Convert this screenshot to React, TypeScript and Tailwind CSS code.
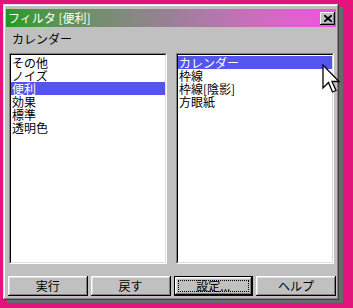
import React from 'react';

// --- Win9x style filter dialog ---

const effects = ['その他', 'ノイズ', '便利', '効果', '標準', '透明色'];
const tools = ['カレンダー', '枠線', '枠線[陰影]', '方眼紙'];

const ListBox: React.FC<{ items: string[]; selected: number }> = ({ items, selected }) => (
    <div className="w-[158px] h-[211px] border border-t-[#808080] border-l-[#808080] border-r-white border-b-white">
        <div className="w-full h-full bg-white border border-t-black border-l-black border-r-[#dfdfdf] border-b-[#dfdfdf] pt-[1px]">
            {items.map((item, i) => (
                <div
                    key={item}
                    className={`h-[13px] leading-[13px] pl-[1px] whitespace-nowrap ${i === selected ? 'bg-[#5454ee] text-white' : 'text-black'}`}
                >
                    {item}
                </div>
            ))}
        </div>
    </div>
);

const DlgButton: React.FC<{ label: string; isDefault?: boolean }> = ({ label, isDefault }) => (
    <div className={`h-[20px] ${isDefault ? 'border border-black' : ''}`}>
        <div className="h-full bg-[#c0c0c0] shadow-[inset_-1px_-1px_#000,inset_1px_1px_#fff,inset_-2px_-2px_#808080,inset_2px_2px_#dfdfdf] flex items-center justify-center p-[3px]">
            {isDefault ? (
                <div className="w-full h-full border border-dotted border-black flex items-center justify-center leading-none">{label}</div>
            ) : (
                <span className="leading-none">{label}</span>
            )}
        </div>
    </div>
);

const Cursor: React.FC = () => (
    <svg className="absolute left-[322px] top-[64px]" width="19" height="30" viewBox="0 0 19 30">
        <path
            d="M1 1 L1 24 L6.5 18.5 L10.5 28 L14 26.5 L10 17.5 L17 17.5 Z"
            fill="#fff"
            stroke="#000"
            strokeWidth="1.3"
            strokeLinejoin="miter"
        />
    </svg>
);

export default function App() {
    return (
        <div
            className="relative w-[353px] h-[308px] bg-[#e2147c] pl-[3px] pt-[4px] overflow-hidden text-[12px] text-black"
            style={{ fontFamily: '"Noto Sans CJK JP", "Noto Sans", sans-serif' }}
        >
            <div className="w-[336px] h-[296px] bg-[#c0c0c0] px-[3px] pt-[5px] shadow-[4px_3px_0_#6a6a6a,inset_-1px_-1px_#404040,inset_1px_1px_#dfdfdf,inset_-2px_-2px_#808080,inset_2px_2px_#fff]">
                {/* title bar */}
                <div className="h-[18px] flex items-center justify-between pl-[2px] pr-[1px] bg-gradient-to-r from-[#1f9a1f] via-[#9a7f98] to-[#f44ee0]">
                    <span className="text-white leading-none">フィルタ [便利]</span>
                    <div className="w-[15px] h-[13px] bg-[#c0c0c0] shadow-[inset_-1px_-1px_#000,inset_1px_1px_#fff,inset_-2px_-2px_#808080] flex items-center justify-center">
                        <svg width="8" height="7" viewBox="0 0 8 7">
                            <path d="M0 0 L8 7 M8 0 L0 7" stroke="#000" strokeWidth="1.8" />
                        </svg>
                    </div>
                </div>

                <div className="mt-[5px] pl-[6px] h-[14px] leading-[14px]">カレンダー</div>

                <div className="mt-[7px] pl-[3px] flex gap-[9px]">
                    <ListBox items={effects} selected={2} />
                    <ListBox items={tools} selected={0} />
                </div>

                <div className="mt-[12px] ml-[2px] w-[328px] grid grid-cols-4 gap-[3px]">
                    <DlgButton label="実行" />
                    <DlgButton label="戻す" />
                    <DlgButton label="設定..." isDefault />
                    <DlgButton label="ヘルプ" />
                </div>
            </div>
            <Cursor />
        </div>
    );
}
